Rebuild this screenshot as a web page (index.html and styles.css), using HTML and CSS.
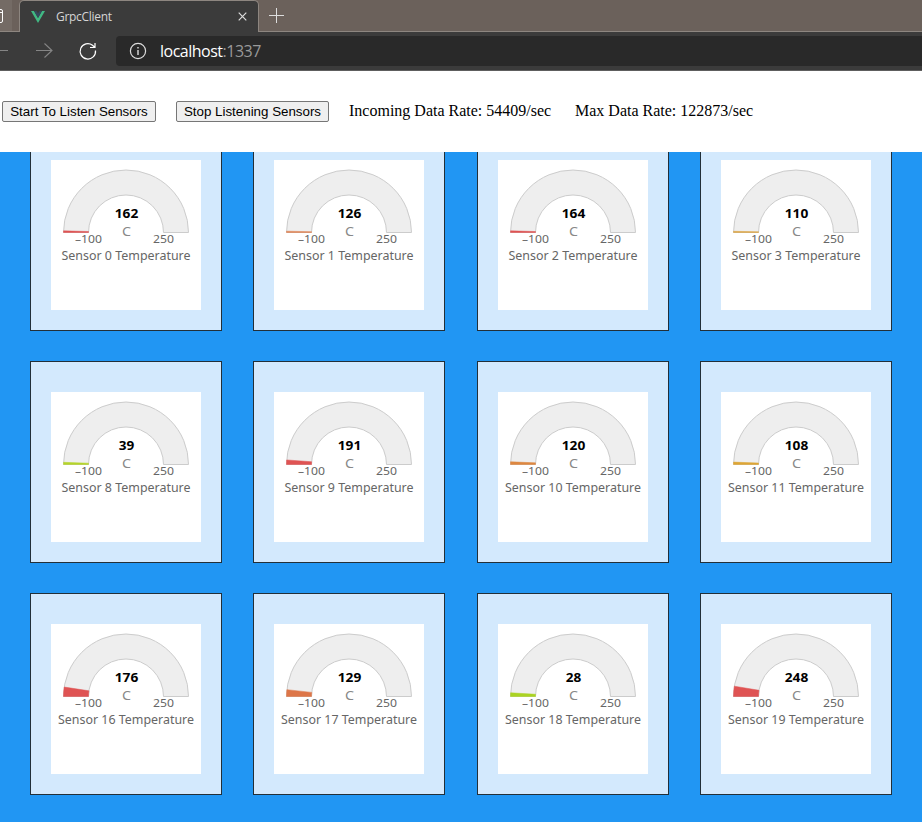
FILE: index.html
```html
<!DOCTYPE html>
<html lang="en">
<head>
<meta charset="utf-8">
<title>GrpcClient</title>
<link rel="stylesheet" href="styles.css">
</head>
<body>
<header class="browser">
  <div class="tabs">
    <div class="edge"><svg width="12" height="31" viewBox="0 0 12 31"><path d="M0 9.500H1Q2.500 9.500 2.500 11V21Q2.500 22.500 1 22.500H0M0 12.500H2" fill="none" stroke="#fff"/></svg></div>
    <div class="tab">
      <svg class="vue" width="14" height="12" viewBox="0 0 14 12"><path d="M0 0H3L7 7L11 0H14L7 12Z" fill="#41b883"/><path d="M3 0H5.500L7 2.500L8.500 0H11L7 7Z" fill="#35495e"/></svg>
      <span class="tab-title">GrpcClient</span>
      <svg class="close" width="9" height="9" viewBox="0 0 9 9"><path d="M.7.700L8.300 8.300M8.300.700L.7 8.300" stroke="#ddd" stroke-width="1.200"/></svg>
    </div>
    <svg class="plus" width="15" height="15" viewBox="0 0 15 15"><path d="M7.500 0V15M0 7.500H15" stroke="#ddd"/></svg>
  </div>
  <div class="toolbar">
    <svg class="nav" width="116" height="39" viewBox="0 0 116 39" fill="none">
      <path d="M0 18.500H8M36 18.500H52M44.500 11.500L52 18.500L44.500 25.500" stroke="#858585" stroke-width="1.100"/>
      <path d="M95.500 18.500A7.700 7.700 0 1 1 92.500 13.200L95 15.500M95 11V15.500H90" stroke="#fff" stroke-width="1.200"/>
    </svg>
    <div class="address">
      <svg width="18" height="18" viewBox="0 0 18 18"><circle cx="9" cy="9" r="7.600" fill="none" stroke="#ddd" stroke-width="1.200"/><path d="M9 8V13M9 5V6.500" stroke="#ddd" stroke-width="1.400"/></svg>
      <span class="url">localhost<span class="port">:1337</span></span>
    </div>
  </div>
</header>
<div class="controls">
  <button class="start">Start To Listen Sensors</button>
  <button class="stop">Stop Listening Sensors</button>
  <span class="rate">Incoming Data Rate: 54409/sec</span>
  <span class="max">Max Data Rate: 122873/sec</span>
</div>
<main class="viewport"><div class="grid" id="grid"></div></main>
<script src="gauges.js"></script>
</body>
</html>
```
FILE: styles.css
```css
* { box-sizing: border-box; }
html, body { height: 100%; }
body {
  margin: 0;
  display: flex;
  flex-direction: column;
  overflow: hidden;
  background: #fff;
  color: #000;
  font: 16px "Liberation Serif", serif;
}
svg { display: block; flex: none; }
.browser {
  flex: none;
  height: 71px;
  background: #3b3b3b;
  border-bottom: 1px solid #5e5e5e;
  font-family: "Open Sans", sans-serif;
}
.tabs { display: flex; height: 32px; background: #6b615b; }
.edge {
  width: 20px;
  border-bottom: 1px solid #8d8680;
  background: linear-gradient(90deg, #746b65 12px, #6b615b 12px);
}
.tab {
  display: flex;
  align-items: center;
  width: 240px;
  padding: 0 11px 0 11px;
  background: #3b3b3b;
  border: 1px solid #8d8680;
  border-bottom: 0;
  border-radius: 5px 5px 0 0;
  margin-left: -1px;
}
.tab-title {
  margin: -1px auto 0 11px;
  color: #d5d5d5;
  font-size: 12px;
  letter-spacing: -.3px;
}
.plus { margin: 8px 0 0 10px; }
.tabs::after {
  content: "";
  flex: 1;
  margin-left: -25px;
  border-bottom: 1px solid #8d8680;
}
.toolbar { display: flex; height: 38px; }
.address {
  flex: 1;
  display: flex;
  align-items: center;
  height: 30px;
  margin-top: 4px;
  padding-left: 13px;
  gap: 13px;
  background: #292929;
  border-radius: 4px 0 0 4px;
}
.url { color: #fff; font-size: 16px; letter-spacing: -.5px; }
.port { color: #999; }
.controls {
  flex: none;
  display: flex;
  align-items: center;
  height: 81px;
  padding-left: 2px;
}
.controls button {
  height: 21px;
  padding: 0;
  border: 1px solid #767676;
  border-radius: 2px;
  background: #efefef;
  color: #000;
  font: 13.333px "Liberation Sans", sans-serif;
  white-space: nowrap;
}
.start { width: 154px; margin-right: 20px; }
.stop { width: 153px; margin-right: 20px; }
.rate, .max { padding-bottom: 2px; }
.rate { width: 226px; }
.viewport { flex: 1; overflow: hidden; background: #2196f3; }
.grid {
  display: grid;
  grid-template-columns: repeat(4, 192px);
  justify-content: space-between;
  row-gap: 30px;
  margin-top: -23px;
  padding: 0 30px;
}
.card {
  height: 202px;
  padding: 30px 20px 20px;
  border: 1px solid #222f38;
  background: #d3e9fd;
}
.chart { background: #fff; font-family: "Noto Sans", sans-serif; }
.track { fill: #eee; stroke: #ccc; }
.value { font-size: 12.5px; font-weight: 700; }
.unit { font-size: 12.5px; fill: #888; }
.limit { font-size: 11px; fill: #666; }
.name { font-size: 12px; fill: #666; }
```
FILE: gauges.js
```javascript
// id, value, displayed sweep in degrees, fill colour
const sensors = [
  [0, 162, 1.5, '#df5353'], [1, 126, 1.2, '#df8050'], [2, 164, 1.5, '#df5353'], [3, 110, 1.1, '#dca545'],
  [8, 39, 2, '#b5d42a'], [9, 191, 4.2, '#df5353'], [10, 120, 2.5, '#dd8740'], [11, 108, 2.2, '#dda535'],
  [16, 176, 8.7, '#df5353'], [17, 129, 6.3, '#dd7648'], [18, 28, 3.4, '#aad322'], [19, 248, 9.5, '#df5353']
];
const point = (r, deg) => {
  const a = deg * Math.PI / 180;
  return `${75 - r * Math.cos(a)} ${72.5 - r * Math.sin(a)}`;
};
const sector = deg => `M${point(62.5, 0)}A62.5 62.5 0 0 1 ${point(62.5, deg)}L${point(37.5, deg)}A37.5 37.5 0 0 0 ${point(37.5, 0)}Z`;
document.getElementById('grid').innerHTML = sensors.map(([id, value, sweep, color]) => {
  const width = id > 9 ? 136 : 129;
  const valueWidth = value > 99 ? 23.5 : 15.5;
  const fit = 'lengthAdjust="spacingAndGlyphs"';
  return `<div class="card"><svg class="chart" width="150" height="150" viewBox="0 0 150 150">
    <path class="track" d="${sector(180)}"/>
    <path d="${sector(sweep)}" fill="${color}" stroke="${color}" stroke-width=".5"/>
    <text class="value" x="${75.5 - valueWidth / 2}" y="58" textLength="${valueWidth}" ${fit}>${value}</text>
    <text class="unit" x="71" y="76" textLength="9" ${fit}>C</text>
    <text class="limit" x="24" y="83" textLength="27" ${fit}>–100</text>
    <text class="limit" x="102" y="83" textLength="21" ${fit}>250</text>
    <text class="name" x="${75 - width / 2}" y="100" textLength="${width}" ${fit}>Sensor ${id} Temperature</text>
  </svg></div>`;
}).join('');
```
